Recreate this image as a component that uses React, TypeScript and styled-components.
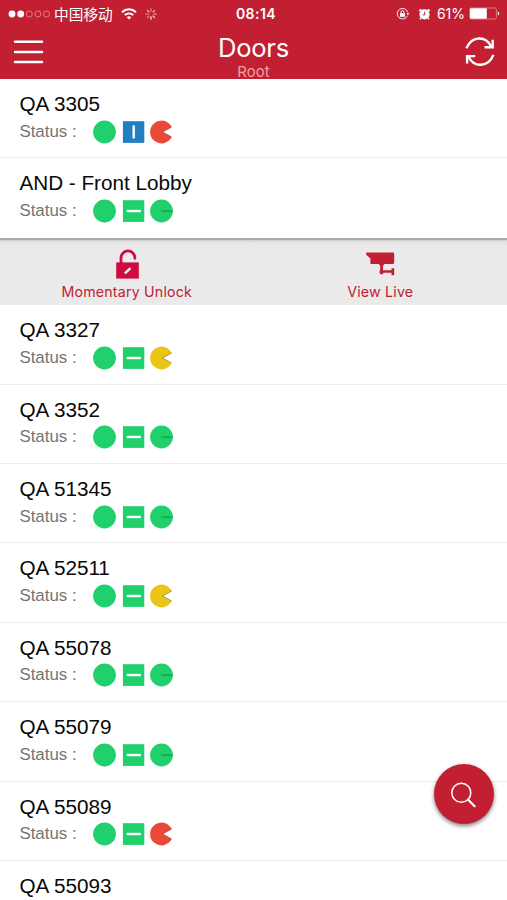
import React from "react";
import styled, { createGlobalStyle } from "styled-components";

const RED = "#c22032";
const GREEN = "#20d06c";
const SYSTEM = 'Inter, "Noto Sans CJK SC", sans-serif';

const GlobalStyle = createGlobalStyle`
  * { box-sizing: border-box; }
  body { margin: 0; background: #fff; overflow: hidden; }
`;

const Screen = styled.main`
  position: relative;
  width: 507px;
  height: 900px;
  overflow: hidden;
  background: #fff;
  font-family: "Liberation Sans", Arial, sans-serif;
`;

const Header = styled.header`
  height: 79px;
  background: ${RED};
  color: #fff;
`;

const StatusBar = styled.div`
  display: grid;
  grid-template-columns: 1fr auto 1fr;
  align-items: center;
  height: 27px;
  padding: 0 7px 0 8px;
  font-family: ${SYSTEM};
`;

const StatusGroup = styled.div<{ $end?: boolean }>`
  display: flex;
  align-items: center;
  gap: 8px;
  justify-content: ${(p) => (p.$end ? "flex-end" : "flex-start")};
  svg { display: block; flex: none; }
`;

const Carrier = styled.span`
  margin-left: -4px;
  font: 14.7px/27px "Noto Sans CJK SC", sans-serif;
`;

const Clock = styled.time`
  font-size: 14px;
  font-weight: 600;
  letter-spacing: 0.45px;
  padding-left: 4px;
`;

const Percent = styled.span`
  margin: 0 -4px 0 -2px;
  font-size: 14px;
`;

const NavBar = styled.div`
  display: grid;
  grid-template-columns: 60px 1fr 60px;
  height: 52px;
`;

const NavButton = styled.button<{ $end?: boolean }>`
  display: flex;
  align-items: flex-start;
  justify-content: ${(p) => (p.$end ? "flex-end" : "flex-start")};
  padding: ${(p) => (p.$end ? "9px 12px 0 0" : "8px 0 0 13px")};
  border: 0;
  background: none;
  color: #fff;
`;

const Heading = styled.div`
  display: flex;
  flex-direction: column;
  align-items: center;
  font-family: ${SYSTEM};
`;

const Title = styled.h1`
  margin: 5px 0 1px;
  font-size: 25.6px;
  font-weight: 400;
  line-height: 32px;
  letter-spacing: -0.3px;
`;

const Subtitle = styled.span`
  font-size: 14.9px;
  line-height: 14px;
  letter-spacing: 0.1px;
  color: #f0a0a6;
`;

const Door = styled.li<{ $divided: boolean }>`
  height: 79.4px;
  padding: 13px 19.4px 0;
  border-bottom: ${(p) => (p.$divided ? "1.4px solid #ededed" : "0")};
`;

const DoorList = styled.ul`
  margin: 0;
  padding: 0;
  list-style: none;
`;

const DoorName = styled.div`
  font-size: 20.7px;
  line-height: 24px;
  color: #080808;
`;

const StatusRow = styled.div`
  display: flex;
  align-items: center;
  height: 24px;
  margin-top: 3.6px;
  gap: 5.4px;
  svg { display: block; flex: none; }
`;

const StatusLabel = styled.span`
  width: 68.4px;
  font-size: 16.9px;
  line-height: 24px;
  color: #757575;
`;

const ActionPanel = styled.section`
  display: grid;
  grid-template-columns: 1fr 1fr;
  height: 67.4px;
  border-top: 2px solid #a9a9a9;
  background: linear-gradient(#cfcfcf 0, #e3e3e3 2px, #eaeaea 6px, #eaeaea 65px, #f0f0f0 100%);
`;

const Action = styled.button`
  display: flex;
  flex-direction: column;
  align-items: center;
  padding: 9px 0 0;
  border: 0;
  background: none;
  color: ${RED};
  svg { display: block; }
`;

const ActionLabel = styled.span`
  margin-top: 4px;
  font-family: ${SYSTEM};
  font-size: 14.2px;
  line-height: 18px;
  letter-spacing: 0.2px;
`;

const SearchButton = styled.button`
  position: absolute;
  right: 13px;
  top: 764px;
  display: flex;
  align-items: center;
  justify-content: center;
  width: 60px;
  height: 60px;
  padding: 0;
  border: 0;
  border-radius: 50%;
  background: ${RED};
  box-shadow: 0 2px 4px rgba(0, 0, 0, 0.5);
`;

type Mode = "bar" | "dash";
type Battery = "full" | "amber" | "red";

const SignalIcon = () => (
  <svg width="42" height="10" viewBox="0 0 42 10">
    <circle cx="4" cy="5" r="3.4" fill="#fff" />
    <circle cx="12.7" cy="5" r="3.4" fill="#fff" />
    {[21.3, 29.9, 38.5].map((x) => (
      <circle key={x} cx={x} cy="5" r="3" fill="none" stroke="#e8909a" strokeWidth="0.8" />
    ))}
  </svg>
);

const WifiIcon = () => (
  <svg width="16" height="12" viewBox="0 0 16 12" fill="none" stroke="#fff" strokeWidth="2">
    <path d="M1 4.2C5 .4 11 .4 15 4.2M3.8 7.1C6.3 4.8 9.7 4.8 12.2 7.1" />
    <path d="M5.8 9.2Q8 7.5 10.2 9.2L8 11.5Z" fill="#fff" stroke="none" />
  </svg>
);

const SpinnerIcon = () => (
  <svg width="12" height="12" viewBox="-6 -6 12 12" stroke="#fff" strokeWidth="1.2" strokeLinecap="round">
    {[0, 45, 90, 135, 180, 225, 270, 315].map((angle, i) => (
      <path key={angle} d="M0 -2.8V-5.2" transform={`rotate(${angle})`} opacity={0.5 + (i % 5) * 0.1} />
    ))}
  </svg>
);

const RotationLockIcon = () => (
  <svg width="14" height="12" viewBox="0 0 14 12" fill="none" stroke="#fff">
    <path d="M11.4 7.8A5.3 5.3 0 1 1 11.7 4.4" strokeWidth="0.9" />
    <path d="M10.4 5.2H13.4L11.9 7.2Z" fill="#fff" stroke="none" />
    <rect x="4" y="5.2" width="5" height="3.6" fill="#fff" stroke="none" />
    <path d="M5 5.2V4.1A1.5 1.5 0 0 1 8 4.1V5.2" strokeWidth="1" />
  </svg>
);

const AlarmIcon = () => (
  <svg width="13" height="12" viewBox="0 0 13 12">
    <circle cx="6.5" cy="6.4" r="5.1" fill="#fff" />
    <path d="M1.3 3.1 3.3 1.3M9.7 1.3 11.7 3.1M2.8 10.2 2 11.3M10.2 10.2 11 11.3" stroke="#fff" strokeWidth="1.8" />
    <path d="M6.7 3.7V6.8H4.6" fill="none" stroke={RED} strokeWidth="1" />
  </svg>
);

const PhoneBatteryIcon = () => (
  <svg width="31" height="13" viewBox="0 0 31 13">
    <rect x=".8" y="1" width="26.6" height="11" rx="1.5" fill="none" stroke="#e8909a" strokeWidth=".8" />
    <rect x="1" y="1.3" width="16.8" height="10.4" rx="1" fill="#fff" />
    <path d="M28.8 4.6Q30.2 5 30.2 6.5T28.8 8.4Z" fill="#fff" />
  </svg>
);

const MenuIcon = () => (
  <svg width="32" height="34" viewBox="0 0 32 34" stroke="#fff" strokeWidth="2.5" strokeLinecap="round">
    <path d="M2 6.7H29M2 17H29M2 27.1H29" />
  </svg>
);

const RefreshIcon = () => (
  <svg width="30" height="32" viewBox="0 0 30 32" fill="none" stroke="#fff" strokeWidth="2.4">
    <path d="M1.4 12.4C6.4 0 20.4-.9 26.3 10.6M28.4 18.9C23.4 31.3 9.4 32.2 3.5 20.7" />
    <path d="M27.7 3.8V11.2H19.6M2.1 27.5V20.1H10.2" />
  </svg>
);

const UnlockIcon = () => (
  <svg width="24" height="30" viewBox="0 0 24 30">
    <path d="M6 14.5V8.9A6.95 6.95 0 0 1 19.9 8.9V9.3" fill="none" stroke="#ce0c40" strokeWidth="2.8" strokeLinecap="round" />
    <rect x="1.2" y="13.4" width="22.6" height="16.2" fill="#ce0c40" />
    <path d="M10.7 23.6 14.6 19.9" stroke="#eee" strokeWidth="2.5" strokeLinecap="square" />
  </svg>
);

const CameraIcon = () => (
  <svg width="29" height="30" viewBox="0 0 29 30" fill={RED}>
    <path d="M0 3.5H27Q28.2 3.5 28.2 4.7V13.6Q28.2 15 27 15H4.4V9.6L.4 6Z" />
    <path d="M12.8 15H18.2L17 17V21.3H25.5V19.2H28.2V26.3H25.5V23.8H17.5L16.8 25.2H14.2L13.6 24V22L14.2 21V17Z" />
  </svg>
);

const DoorDot = () => (
  <svg width="23" height="24" viewBox="0 0 23 24">
    <circle cx="11.5" cy="12" r="11.4" fill={GREEN} />
  </svg>
);

const LockMode = ({ mode }: { mode: Mode }) => (
  <svg width="23" height="24" viewBox="0 0 23 24">
    <rect x=".9" y="1.2" width="21.4" height="21.7" fill={mode === "bar" ? "#217fc1" : GREEN} />
    <path d={mode === "bar" ? "M11.7 5.4V18.4" : "M4.7 12H18.9"} stroke="#fff" strokeWidth="2.4" />
  </svg>
);

const BatteryLevel = ({ level }: { level: Battery }) => (
  <svg width="23" height="24" viewBox="0 0 23 24">
    {level === "full" ? (
      <>
        <circle cx="11.5" cy="12" r="11.4" fill={GREEN} />
        <path d="M11.3 12.1H22.7" stroke="#148b4b" strokeWidth="1" />
      </>
    ) : (
      <>
        <path
          d="M12.2 12 21.6 17.3A11.4 11.4 0 1 1 21.6 6.7Z"
          fill={level === "amber" ? "#eac516" : "#eb4937"}
        />
        <path
          d="M21.6 7 12.4 12 21.6 17"
          fill="none"
          stroke={level === "amber" ? "#a48916" : "#b83b2c"}
          strokeWidth=".9"
        />
      </>
    )}
  </svg>
);

interface DoorData {
  name: string;
  mode?: Mode;
  battery?: Battery;
  collapsed?: boolean;
}

const pinned: DoorData[] = [
  { name: "QA 3305", mode: "bar", battery: "red" },
  { name: "AND - Front Lobby" },
];

const doors: DoorData[] = [
  { name: "QA 3327", battery: "amber" },
  { name: "QA 3352" },
  { name: "QA 51345" },
  { name: "QA 52511", battery: "amber" },
  { name: "QA 55078" },
  { name: "QA 55079" },
  { name: "QA 55089", battery: "red" },
  { name: "QA 55093", collapsed: true },
];

const Doors = ({ items, lastDivided = true }: { items: DoorData[]; lastDivided?: boolean }) => (
  <DoorList>
    {items.map(({ name, mode = "dash", battery = "full", collapsed }, i) => (
      <Door key={name} $divided={lastDivided || i < items.length - 1}>
        <DoorName>{name}</DoorName>
        {!collapsed && (
          <StatusRow>
            <StatusLabel>Status :</StatusLabel>
            <DoorDot />
            <LockMode mode={mode} />
            <BatteryLevel level={battery} />
          </StatusRow>
        )}
      </Door>
    ))}
  </DoorList>
);

export default function App() {
  return (
    <>
      <GlobalStyle />
      <Screen>
        <Header>
          <StatusBar>
            <StatusGroup>
              <SignalIcon />
              <Carrier>中国移动</Carrier>
              <WifiIcon />
              <SpinnerIcon />
            </StatusGroup>
            <Clock>08:14</Clock>
            <StatusGroup $end>
              <RotationLockIcon />
              <AlarmIcon />
              <Percent>61%</Percent>
              <PhoneBatteryIcon />
            </StatusGroup>
          </StatusBar>
          <NavBar>
            <NavButton aria-label="Menu"><MenuIcon /></NavButton>
            <Heading>
              <Title>Doors</Title>
              <Subtitle>Root</Subtitle>
            </Heading>
            <NavButton $end aria-label="Refresh"><RefreshIcon /></NavButton>
          </NavBar>
        </Header>
        <Doors items={pinned} lastDivided={false} />
        <ActionPanel>
          <Action>
            <UnlockIcon />
            <ActionLabel>Momentary Unlock</ActionLabel>
          </Action>
          <Action>
            <CameraIcon />
            <ActionLabel>View Live</ActionLabel>
          </Action>
        </ActionPanel>
        <Doors items={doors} />
        <SearchButton aria-label="Search">
          <svg width="28" height="28" viewBox="0 0 28 28" fill="none" stroke="#fff">
            <circle cx="11.3" cy="12.8" r="9.5" strokeWidth="1.5" />
            <path d="M18.5 20 24.6 26.2" strokeWidth="2.2" strokeLinecap="round" />
          </svg>
        </SearchButton>
      </Screen>
    </>
  );
}
